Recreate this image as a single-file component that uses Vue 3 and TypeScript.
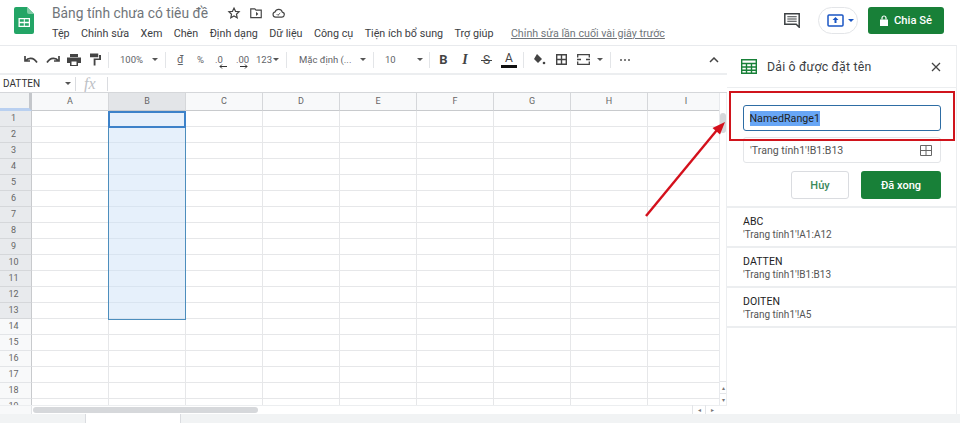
<script setup lang="ts">
const menus: string[] = ['Tệp', 'Chỉnh sửa', 'Xem', 'Chèn', 'Định dạng', 'Dữ liệu', 'Công cụ', 'Tiện ích bổ sung', 'Trợ giúp']
const cols: string[] = ['A', 'B', 'C', 'D', 'E', 'F', 'G', 'H', 'I']
const rows: number[] = Array.from({ length: 19 }, (_, i) => i + 1)
const ranges = [
  { name: 'ABC', ref: "'Trang tính1'!A1:A12" },
  { name: 'DATTEN', ref: "'Trang tính1'!B1:B13" },
  { name: 'DOITEN', ref: "'Trang tính1'!A5" },
]
</script>

<template>
  <div class="app">
    <header class="top">
      <svg class="logo" width="20" height="27" viewBox="0 0 20 27">
        <path d="M2 0h11l7 7v18a2 2 0 0 1-2 2H2a2 2 0 0 1-2-2V2a2 2 0 0 1 2-2z" fill="#23a566" />
        <path d="M13 0l7 7h-5a2 2 0 0 1-2-2z" fill="#7fcba5" />
        <path d="M4.500 11h11.500v9H4.500z M5.800 12.300v2.500h4v-2.500z M10.800 12.300v2.500h4v-2.500z M5.800 16.200v2.500h4v-2.500z M10.800 16.200v2.500h4v-2.500z" fill="#fff" fill-rule="evenodd" />
      </svg>
      <div class="title-area">
        <div class="title-row">
          <span class="doc-title">Bảng tính chưa có tiêu đề</span>
          <span class="title-icons">
            <svg width="14" height="14" viewBox="0 0 24 24"><path d="M12 3.500l2.600 5.700 6.200.7-4.600 4.200 1.300 6.100L12 17.200l-5.500 3 1.300-6.100-4.600-4.200 6.200-.7z" fill="none" stroke="#444" stroke-width="2" /></svg>
            <svg width="14" height="14" viewBox="0 0 24 24"><path d="M3 5h7l2 2h9v13H3z" fill="none" stroke="#444" stroke-width="2" /><path d="M12 10l4 3.500-4 3.500z" fill="#444" /></svg>
            <svg width="15" height="14" viewBox="0 0 24 24"><path d="M7 19a4.500 4.500 0 0 1-.8-8.900A6.500 6.500 0 0 1 18.500 10.500 4.300 4.300 0 0 1 18 19z" fill="none" stroke="#444" stroke-width="2" /><path d="M9 14l2 2 4-4" fill="none" stroke="#444" stroke-width="1.600" /></svg>
          </span>
        </div>
        <nav class="menu-row">
          <span v-for="m in menus" :key="m" class="menu">{{ m }}</span>
          <span class="last-edit">Chỉnh sửa lần cuối vài giây trước</span>
        </nav>
      </div>
      <div class="top-right">
        <svg class="comment" width="16" height="15" viewBox="0 0 16 15"><path d="M.8.800h14.400v13.400l-3-3H.8z" fill="none" stroke="#3c4043" stroke-width="1.500" /><path d="M3.300 3.800h9.400M3.300 6h9.400M3.300 8.200h9.400" stroke="#3c4043" stroke-width="1.100" /></svg>
        <div class="present">
          <svg width="17" height="13" viewBox="0 0 17 13"><rect x="1" y="1" width="15" height="11" rx="1" fill="#fff" stroke="#1a56c4" stroke-width="1.500" /><path d="M8.500 3l3 3H9.500v3h-2V6h-2z" fill="#1a56c4" /></svg>
          <i class="caret blue"></i>
        </div>
        <button class="share">
          <svg width="8" height="11" viewBox="0 0 8 11"><path d="M0 4.500h8V11H0z" fill="#fff" /><path d="M2 4.500V3a2 2 0 0 1 4 0v1.500" fill="none" stroke="#fff" stroke-width="1.200" /></svg>
          <span>Chia Sẻ</span>
        </button>
      </div>
    </header>

    <div class="body">
      <div class="left">
        <div class="toolbar">
          <svg class="tb first" width="14" height="10" viewBox="0 0 14 10"><path d="M1 1v5h5M1.500 6C4 2.500 9.500 2 13 7.500" fill="none" stroke="#444" stroke-width="1.700" /></svg>
          <svg class="tb redo" width="14" height="10" viewBox="0 0 14 10"><path d="M13 1v5H8M12.500 6C10 2.500 4.500 2 1 7.500" fill="none" stroke="#444" stroke-width="1.700" /></svg>
          <svg class="tb print" width="14" height="12" viewBox="0 0 14 12"><path d="M3 0h8v3H3zM0 3.500h14V9h-3v3H3V9H0z" fill="#444" /><path d="M4.500 7.500h5V11h-5z" fill="#fff" /></svg>
          <svg class="tb paint" width="11" height="13" viewBox="0 0 12 13"><path d="M0 0h9v4H0zM9.800 1.500H12V7H6v6H4V5.500h6z" fill="#444" /></svg>
          <i class="sep s1"></i>
          <span class="tt zoom-t">100%</span><i class="caret c1"></i>
          <i class="sep s2"></i>
          <span class="tt dong">₫</span>
          <span class="tt pct">%</span>
          <span class="tt dec1">.0<svg class="arr" width="8" height="5" viewBox="0 0 8 5"><path d="M8 2.500H1M3 .5l-2 2 2 2" fill="none" stroke="#333" stroke-width="1" /></svg></span>
          <span class="tt dec2">.00<svg class="arr" width="8" height="5" viewBox="0 0 8 5"><path d="M0 2.500h7M5 .5l2 2-2 2" fill="none" stroke="#333" stroke-width="1" /></svg></span>
          <span class="tt num">123</span><i class="caret c2"></i>
          <i class="sep s3"></i>
          <span class="tt font">Mặc định (...</span><i class="caret c3"></i>
          <i class="sep s4"></i>
          <span class="tt size">10</span><i class="caret c4"></i>
          <i class="sep s5"></i>
          <span class="tf bold">B</span>
          <span class="tf ital">I</span>
          <span class="tf strike">S</span>
          <span class="tf color">A</span>
          <i class="sep s6"></i>
          <svg class="tb fill" width="14" height="14" viewBox="0 0 14 14"><path d="M5 1l5 5-4 4-4-4z" fill="#444" /><circle cx="12" cy="10" r="1.300" fill="#444" /></svg>
          <svg class="tb grid-i" width="11" height="11" viewBox="0 0 11 11"><path d="M.7.700h9.600v9.600H.7zM5.500.700v9.600M.7 5.500h9.600" fill="none" stroke="#444" stroke-width="1.400" /></svg>
          <svg class="tb merge" width="13" height="11" viewBox="0 0 13 11"><path d="M.7 3.500V.7h11.600v2.800M.7 7.500v2.800h11.600V7.500M0 5.500h4M9 5.500h4" fill="none" stroke="#444" stroke-width="1.300" /></svg>
          <i class="caret c5"></i>
          <i class="sep s7"></i>
          <span class="dots"><i></i><i></i><i></i></span>
          <svg class="chev" width="10" height="6" viewBox="0 0 10 6"><path d="M1 5l4-4 4 4" fill="none" stroke="#444" stroke-width="1.500" /></svg>
        </div>

        <div class="formula">
          <span class="name-box">DATTEN</span>
          <i class="caret c6"></i>
          <i class="fsep"></i>
          <span class="fx">fx</span>
          <i class="fsep"></i>
        </div>

        <div class="sheet-wrap">
          <div class="sheet">
            <div class="col-head">
              <div class="corner"></div>
              <div v-for="c in cols" :key="c" class="ch" :class="{ on: c === 'B' }">{{ c }}</div>
            </div>
            <div v-for="r in rows" :key="r" class="row">
              <div class="rh" :class="{ on: r <= 13 }">{{ r }}</div>
              <div v-for="c in cols" :key="c" class="cell" :class="{ sel: c === 'B' && r <= 13 }"></div>
            </div>
            <div class="sel-range"></div>
            <div class="sel-active"></div>
          </div>
          <div class="vscroll">
            <div class="vthumb"></div>
            <div class="vbtns"><span>▴</span><span>▾</span></div>
          </div>
        </div>
        <div class="hscroll">
          <div class="hgut"></div>
          <div class="hthumb"></div>
          <span class="hbtns"><b>◂</b><b>▸</b></span>
        </div>
      </div>

      <aside class="panel">
        <div class="panel-head">
          <svg width="16" height="15" viewBox="0 0 16 15"><path d="M.7.700h14.600v13.600H.7zM.7 4.500h14.600M.7 8h14.600M.7 11.200h14.600M5.500 4.500v9.800M10.500 4.500v9.800" fill="none" stroke="#188038" stroke-width="1.400" /></svg>
          <span class="panel-title">Dải ô được đặt tên</span>
          <svg class="close" width="10" height="10" viewBox="0 0 10 10"><path d="M1 1l8 8M9 1l-8 8" stroke="#444" stroke-width="1.300" /></svg>
        </div>
        <div class="form">
          <div class="name-input"><span class="hl">NamedRange1</span></div>
          <div class="range-input">
            <span>'Trang tính1'!B1:B13</span>
            <svg width="12" height="11" viewBox="0 0 12 11"><path d="M.5.500h11v10H.5zM6 .5v10M.5 5.500h11" fill="none" stroke="#666" stroke-width="1" /></svg>
          </div>
          <div class="actions">
            <button class="cancel">Hủy</button>
            <button class="done">Đã xong</button>
          </div>
        </div>
        <div v-for="x in ranges" :key="x.name" class="item">
          <div class="item-name">{{ x.name }}</div>
          <div class="item-ref">{{ x.ref }}</div>
        </div>
      </aside>
    </div>

    <footer class="bottom">
      <div class="tab"></div>
    </footer>

    <div class="red-box"></div>
    <svg class="arrow" width="90" height="110" viewBox="0 0 90 110">
      <path d="M2 107L73 21" stroke="#d4101c" stroke-width="2.400" />
      <path d="M81 13L76 25.500 68.500 19z" fill="#d4101c" />
    </svg>
  </div>
</template>

<style>
html, body { margin: 0; background: #fff; }
</style>

<style scoped>
.app {
  position: relative;
  width: 960px;
  height: 423px;
  overflow: hidden;
  display: flex;
  flex-direction: column;
  font-family: Roboto, "Liberation Sans", sans-serif;
  color: #3c4043;
  background: #fff;
}
i { display: block; font-style: normal; }

.top { height: 45px; flex: none; display: flex; align-items: flex-start; box-sizing: border-box; padding: 7px 0 0 14px; }
.logo { flex: none; }
.title-area { margin-left: 18px; flex: 1; margin-top: -4px; }
.title-row { display: flex; align-items: center; height: 20px; }
.doc-title { font-size: 13.800px; color: #70757a; }
.title-icons { display: flex; align-items: center; gap: 8px; margin-left: 19px; }
.menu-row { display: flex; align-items: center; margin-top: 2px; font-size: 10.750px; color: #3c4043; height: 16px; }
.menu { margin-right: 11.400px; white-space: nowrap; }
.last-edit { margin-left: 6px; color: #70757a; text-decoration: underline; white-space: nowrap; font-size: 10.700px; }
.top-right { display: flex; align-items: center; flex: none; padding-right: 16px; }
.comment { margin-right: 18px; }
.present { width: 40px; height: 27px; box-sizing: border-box; border: 1px solid #e3e5e8; border-radius: 14px; display: flex; align-items: center; padding-left: 8px; margin-right: 10px; }
.present .caret { margin-left: 4px; }
.share { width: 76px; height: 27px; border: 0; border-radius: 3px; background: #188038; color: #fff; font: 500 11.200px Roboto, sans-serif; display: flex; align-items: center; justify-content: center; gap: 6px; padding: 0; }

.caret { width: 0; height: 0; border-left: 3px solid transparent; border-right: 3px solid transparent; border-top: 3px solid #555; flex: none; }
.caret.blue { border-top-color: #1a56c4; }

.body { flex: 1; display: flex; min-height: 0; }
.left { width: 727px; flex: none; display: flex; flex-direction: column; min-height: 0; }

.toolbar { height: 30px; flex: none; box-sizing: border-box; border-top: 1px solid #e8eaed; border-bottom: 2px solid #eceef0; display: flex; align-items: center; font-size: 9.500px; color: #5f6368; }
.tb { flex: none; }
.tb.first { margin-left: 24px; }
.redo { margin-left: 8px; }
.print { margin-left: 7px; }
.paint { margin-left: 9px; }
.sep { width: 1px; height: 16px; background: #e3e5e8; flex: none; }
.s1 { margin-left: 7px; }
.zoom-t { margin-left: 11px; width: 23px; white-space: nowrap; }
.c1 { margin-left: 9px; }
.s2 { margin-left: 7px; }
.dong { margin-left: 11px; width: 6px; font-size: 11px; }
.pct { margin-left: 14px; width: 8px; }
.dec1 { margin-left: 10px; position: relative; width: 8px; }
.dec2 { margin-left: 13px; position: relative; width: 13px; }
.arr { position: absolute; left: 4px; top: 10px; }
.num { margin-left: 7px; width: 16px; }
.c2 { margin-left: 1px; }
.s3 { margin-left: 7px; }
.font { margin-left: 12px; width: 52px; white-space: nowrap; }
.c3 { margin-left: 9px; }
.s4 { margin-left: 7px; }
.size { margin-left: 11px; width: 11px; }
.c4 { margin-left: 21px; }
.s5 { margin-left: 6px; }
.tf { font-size: 13px; color: #444; flex: none; line-height: 16px; text-align: center; }
.bold { margin-left: 9px; width: 9px; font-weight: 700; }
.ital { margin-left: 12px; width: 10px; font-style: italic; font-weight: 700; font-family: "Liberation Serif", serif; font-size: 14px; }
.strike { margin-left: 11px; width: 11px; font-size: 12px; position: relative; }
.strike::after { content: ""; position: absolute; left: 0; right: 0; top: 8px; height: 1px; background: #444; }
.color { margin-left: 9px; border-bottom: 3px solid #111; width: 16px; line-height: 13px; font-size: 12px; box-sizing: border-box; }
.s6 { margin-left: 6px; }
.fill { margin-left: 8px; }
.grid-i { margin-left: 10px; }
.merge { margin-left: 10px; }
.c5 { margin-left: 7px; }
.s7 { margin-left: 7px; }
.dots { display: flex; gap: 2px; margin-left: 9px; }
.dots i { width: 2px; height: 2px; background: #555; border-radius: 50%; }
.chev { margin-left: 79px; }

.formula { height: 17px; flex: none; display: flex; align-items: center; font-size: 10px; color: #333; }
.name-box { margin-left: 3px; width: 61px; }
.c6 { margin-left: 1px; }
.fsep { width: 1px; height: 14px; background: #dadce0; flex: none; margin-left: 4px; }
.fx { font-family: "Liberation Serif", serif; font-style: italic; font-size: 16px; color: #bdc1c6; margin-left: 8px; width: 17px; }
.fx + .fsep { margin-left: 6px; }

.sheet-wrap { height: 313px; flex: none; display: flex; border-top: 1px solid #d5d7da; box-sizing: border-box; }
.sheet { position: relative; width: 719px; overflow: hidden; flex: none; }
.col-head { display: flex; height: 18px; }
.corner { width: 32px; flex: none; box-sizing: border-box; background: #f1f3f4; border-right: 3px solid #c4c7cb; border-bottom: 3px solid #b9d0f0; }
.ch { width: 77px; flex: none; box-sizing: border-box; background: #f8f9fa; border-right: 1px solid #d5d7da; border-bottom: 1px solid #c8cacd; font-size: 9px; color: #666; text-align: center; line-height: 17px; }
.ch.on { background: #e3e5e8; }
.row { display: flex; height: 16px; }
.rh { width: 32px; flex: none; box-sizing: border-box; background: #f8f9fa; border-right: 1px solid #c8cacd; border-bottom: 1px solid #e3e5e8; font-size: 9px; color: #666; line-height: 15px; padding-right: 4px; text-align: center; }
.rh.on { background: #e8eaed; border-bottom-color: #d5d7da; }
.cell { width: 77px; flex: none; box-sizing: border-box; border-right: 1px solid #e6e7e9; border-bottom: 1px solid #e6e7e9; }
.cell.sel { background: #e6f0fb; border-right-color: #e6f0fb; border-bottom-color: #d9e4f0; }
.sel-range { position: absolute; left: 108px; top: 18px; width: 78px; height: 209px; box-sizing: border-box; border: 1px solid #4d8ebd; }
.sel-active { position: absolute; left: 108px; top: 18px; width: 78px; height: 17px; box-sizing: border-box; border: 2px solid #3d82c9; }

.vscroll { flex: 1; position: relative; background: #fff; border-left: 1px solid #e8eaed; border-right: 1px solid #eceef0; }
.vthumb { position: absolute; left: 0; top: 20px; width: 6px; height: 20px; background: #d5d7da; border-radius: 3px; }
.vbtns { position: absolute; left: 0; right: 0; bottom: 0; display: flex; flex-direction: column; font-size: 6px; color: #777; text-align: center; line-height: 11px; }
.vbtns span { border-top: 1px solid #e3e5e8; }

.hscroll { height: 9px; flex: none; display: flex; align-items: center; position: relative; background: #fff; border-top: 1px solid #eceef0; box-sizing: border-box; }
.hgut { width: 32px; flex: none; height: 100%; box-sizing: border-box; border-right: 1px solid #e3e5e8; background: #f8f9fa; }
.hthumb { width: 225px; height: 6px; margin-left: 1px; background: #d6d8db; border-radius: 3px; }
.hbtns { position: absolute; right: 9px; top: -1px; display: flex; font-size: 6px; color: #777; line-height: 9px; }
.hbtns b { width: 12px; text-align: center; font-weight: 400; border-left: 1px solid #e3e5e8; }

.panel { width: 230px; flex: none; box-sizing: border-box; border-top: 1px solid #e8eaed; border-right: 1px solid #eceef0; background: #fff; }
.panel-head { height: 42px; box-sizing: border-box; display: flex; align-items: center; padding: 0 15px 0 14px; border-bottom: 1px solid #eceef0; }
.panel-title { font-size: 12.300px; color: #3c4043; margin-left: 10px; flex: 1; letter-spacing: .2px; }
.form { padding: 17px 15px 7px 16px; border-bottom: 2px solid #eceef0; height: 120px; box-sizing: border-box; }
.name-input { height: 26px; box-sizing: border-box; border: 1.500px solid #2e6da4; border-radius: 3px; padding-left: 5.500px; display: flex; align-items: center; font-size: 10.700px; color: #222; }
.hl { background: #68a6f5; line-height: 15px; }
.range-input { margin-top: 6px; height: 26px; box-sizing: border-box; border: 1px solid #e3e5e8; border-radius: 3px; padding: 0 8px 0 6px; display: flex; align-items: center; justify-content: space-between; font-size: 10.600px; color: #555; }
.actions { display: flex; justify-content: flex-end; gap: 12px; margin-top: 8px; }
.cancel, .done { height: 28px; border-radius: 3px; font: 500 11px Roboto, sans-serif; padding: 0; }
.cancel { width: 58px; background: #fff; border: 1px solid #dadce0; color: #3a8a5a; }
.done { width: 80px; background: #188038; border: 0; color: #fff; }
.item { height: 40px; box-sizing: border-box; border-bottom: 2px solid #eceef0; padding: 7px 15px 0 16px; }
.item-name { font-size: 10.500px; color: #222; line-height: 13px; letter-spacing: .1px; }
.item-ref { font-size: 10px; color: #555; line-height: 13px; }

.bottom { height: 9px; flex: none; background: #f1f3f4; position: relative; }
.tab { position: absolute; left: 85px; top: 0; width: 96px; height: 9px; background: #fff; box-sizing: border-box; border-left: 1px solid #dadce0; border-right: 1px solid #dadce0; }

.red-box { position: absolute; left: 729px; top: 91px; width: 226px; height: 50px; box-sizing: border-box; border: 2px solid #d0141c; }
.arrow { position: absolute; left: 644px; top: 109px; }
</style>
